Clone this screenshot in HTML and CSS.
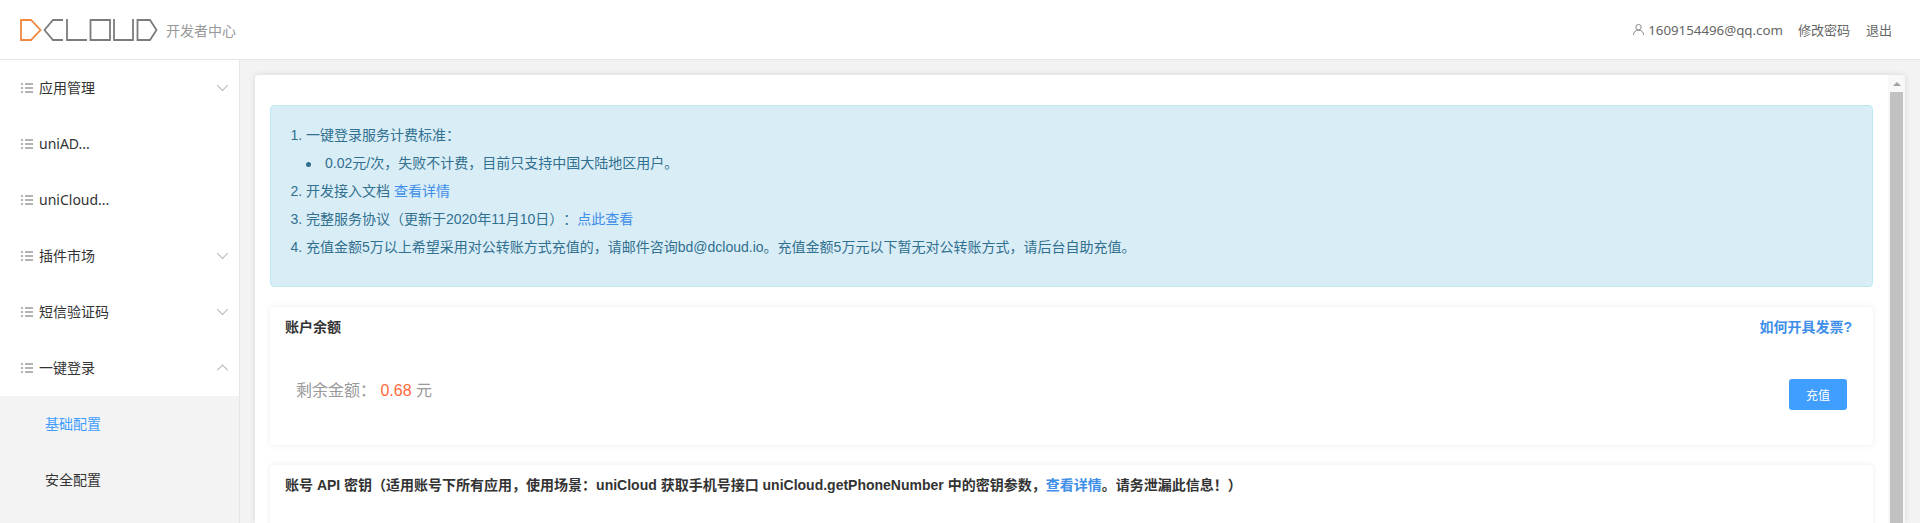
FILE: index.html
```html
<!DOCTYPE html>
<html lang="zh-CN">
<head>
    <meta charset="UTF-8">
    <meta name="viewport" content="width=device-width, initial-scale=1.0">
    <title>DCloud 开发者中心</title>
    <link rel="stylesheet" href="styles.css">
</head>
<body>
    <header class="topbar">
        <div class="brand">
            <svg class="logo" width="140" height="24" viewBox="0 0 140 24" fill="none" stroke-width="1.8">
                <path d="M1 2H11L20.5 12L11 22H1Z" stroke="#f0883e"/>
                <path d="M43 2H33L24.5 12L33 22H43" stroke="#7c7c7c"/>
                <path d="M47 1V22H67" stroke="#7c7c7c"/>
                <path d="M70.5 2H90V22H70.5Z" stroke="#7c7c7c"/>
                <path d="M94 1V22H113V1" stroke="#7c7c7c"/>
                <path d="M117.500 1V22H130L136.500 12L130 2H117.500" stroke="#7c7c7c"/>
            </svg>
            <span class="brand-text">开发者中心</span>
        </div>
        <nav class="account">
            <span class="account-user">
                <svg width="11" height="11" viewBox="0 0 11 11" fill="none" stroke="#888" stroke-width="1">
                    <circle cx="5.500" cy="3.200" r="2.700"/>
                    <path d="M0.500 11C0.500 8 2.500 6.200 5.500 6.200S10.500 8 10.500 11"/>
                </svg>
                1609154496@qq.com
            </span>
            <a href="#">修改密码</a>
            <a href="#">退出</a>
        </nav>
    </header>

    <div class="layout">
        <aside class="sidebar">
            <div class="menu-item">
                <svg class="list-icon" viewBox="0 0 12 10"><path d="M0 1H2M4 1H12M0 5H2M4 5H12M0 9H2M4 9H12"/></svg>
                <span>应用管理</span>
                <svg class="arrow" viewBox="0 0 12 7"><path d="M1 1L6 6L11 1"/></svg>
            </div>
            <div class="menu-item">
                <svg class="list-icon" viewBox="0 0 12 10"><path d="M0 1H2M4 1H12M0 5H2M4 5H12M0 9H2M4 9H12"/></svg>
                <span>uniAD...</span>
            </div>
            <div class="menu-item">
                <svg class="list-icon" viewBox="0 0 12 10"><path d="M0 1H2M4 1H12M0 5H2M4 5H12M0 9H2M4 9H12"/></svg>
                <span>uniCloud...</span>
            </div>
            <div class="menu-item">
                <svg class="list-icon" viewBox="0 0 12 10"><path d="M0 1H2M4 1H12M0 5H2M4 5H12M0 9H2M4 9H12"/></svg>
                <span>插件市场</span>
                <svg class="arrow" viewBox="0 0 12 7"><path d="M1 1L6 6L11 1"/></svg>
            </div>
            <div class="menu-item">
                <svg class="list-icon" viewBox="0 0 12 10"><path d="M0 1H2M4 1H12M0 5H2M4 5H12M0 9H2M4 9H12"/></svg>
                <span>短信验证码</span>
                <svg class="arrow" viewBox="0 0 12 7"><path d="M1 1L6 6L11 1"/></svg>
            </div>
            <div class="menu-item">
                <svg class="list-icon" viewBox="0 0 12 10"><path d="M0 1H2M4 1H12M0 5H2M4 5H12M0 9H2M4 9H12"/></svg>
                <span>一键登录</span>
                <svg class="arrow" viewBox="0 0 12 7"><path d="M1 6L6 1L11 6"/></svg>
            </div>
            <div class="submenu">
                <div class="submenu-item active">基础配置</div>
                <div class="submenu-item">安全配置</div>
            </div>
        </aside>

        <main class="main">
            <div class="panel">
                <div class="panel-body">
                    <div class="alert">
                        <ol>
                            <li>一键登录服务计费标准：
                                <ul>
                                    <li>0.02元/次，失败不计费，目前只支持中国大陆地区用户。</li>
                                </ul>
                            </li>
                            <li>开发接入文档 <a href="#">查看详情</a></li>
                            <li>完整服务协议（更新于2020年11月10日）：<a href="#">点此查看</a></li>
                            <li>充值金额5万以上希望采用对公转账方式充值的，请邮件咨询bd@dcloud.io。充值金额5万元以下暂无对公转账方式，请后台自助充值。</li>
                        </ol>
                    </div>

                    <section class="card">
                        <div class="card-head">
                            <span>账户余额</span>
                            <a href="#">如何开具发票?</a>
                        </div>
                        <div class="balance">
                            <div class="balance-text">剩余金额： <em>0.68</em> 元</div>
                            <button class="btn-primary">充值</button>
                        </div>
                    </section>

                    <section class="card card-tall">
                        <div class="card-head">
                            <span>账号 API 密钥（适用账号下所有应用，使用场景：uniCloud 获取手机号接口 uniCloud.getPhoneNumber 中的密钥参数，<a href="#">查看详情</a>。请务泄漏此信息！）</span>
                        </div>
                    </section>
                </div>
                <div class="scrollbar">
                    <div class="scroll-up"></div>
                    <div class="scroll-thumb"></div>
                </div>
            </div>
        </main>
    </div>
</body>
</html>
```

FILE: styles.css
```css
* {
    box-sizing: border-box;
}
html, body {
    height: 100%;
}
body {
    margin: 0;
    overflow: hidden;
    background: #f3f3f3;
    color: #333;
    font-family: "Liberation Sans", "Noto Sans CJK SC", sans-serif;
    font-size: 14px;
    text-spacing-trim: space-all;
}
a {
    color: #3f8fe8;
    text-decoration: none;
}

.topbar {
    display: flex;
    justify-content: space-between;
    align-items: center;
    height: 60px;
    padding: 0 28px 0 20px;
    background: #fff;
    border-bottom: 1px solid #e6e6e6;
}
.brand {
    display: flex;
    align-items: center;
}
.logo {
    display: block;
}
.brand-text {
    margin-left: 6px;
    color: #999;
}
.account {
    display: flex;
    align-items: center;
    gap: 16px;
    font-family: "Noto Sans", "Noto Sans CJK SC", sans-serif;
    font-size: 13px;
}
.account a {
    color: #666;
}
.account-user {
    display: flex;
    align-items: center;
    gap: 4px;
    margin-right: -1px;
    color: #666;
    font-size: 13.3px;
}

.layout {
    display: flex;
    height: calc(100% - 60px);
}
.sidebar {
    display: flex;
    flex-direction: column;
    flex: none;
    width: 240px;
    background: #fff;
    border-right: 1px solid #e6e6e6;
    font-family: "Noto Sans", "Noto Sans CJK SC", sans-serif;
}
.menu-item {
    display: flex;
    flex: none;
    align-items: center;
    height: 56px;
    padding-left: 21px;
    color: #333;
}
.menu-item span {
    padding-bottom: 2px;
}
.list-icon {
    width: 12px;
    height: 10px;
    margin-right: 6px;
    fill: none;
    stroke: #666;
    stroke-width: 1;
}
.arrow {
    width: 13px;
    height: 7.5px;
    margin-left: auto;
    margin-right: 10px;
    fill: none;
    stroke: #bbb;
    stroke-width: 1;
}
.submenu {
    flex: 1;
    background: #f3f3f3;
}
.submenu-item {
    display: flex;
    align-items: center;
    height: 56px;
    padding: 0 0 2px 45px;
}
.submenu-item.active {
    color: #409eff;
}

.main {
    flex: 1;
    min-width: 0;
    padding: 15px 15px 0;
}
.panel {
    display: flex;
    height: 100%;
    overflow: hidden;
    background: #fff;
    border-radius: 4px 4px 0 0;
    box-shadow: 0 0 6px rgba(0, 0, 0, 0.12);
}
.panel-body {
    flex: 1;
    min-width: 0;
    padding: 30px 15px 0;
}
.scrollbar {
    flex: none;
    width: 17px;
    padding: 0 2px;
    background: #f8f8f8;
}
.scroll-up {
    width: 0;
    height: 0;
    margin: 7px auto 6px;
    border-left: 4px solid transparent;
    border-right: 4px solid transparent;
    border-bottom: 4px solid #a3a3a3;
}
.scroll-thumb {
    height: 100%;
    background: #c1c1c1;
}

.alert {
    height: 182px;
    margin-bottom: 20px;
    padding: 15px 20px;
    color: #31708f;
    background: #d9edf7;
    border: 1px solid #bce8f1;
    border-radius: 4px;
    line-height: 28px;
}
.alert ol {
    margin: 0;
    padding-left: 15px;
}
.alert ul {
    margin: 0;
    padding-left: 19px;
    list-style: none;
}
.alert ul li::before {
    content: "";
    display: inline-block;
    width: 5px;
    height: 5px;
    margin: 0 14.5px 0 -19.5px;
    border-radius: 50%;
    background: #31708f;
    vertical-align: middle;
}
.alert a {
    color: #3f8fe8;
}

.card {
    margin-bottom: 20px;
    border-radius: 4px;
    box-shadow: 0 0 6px rgba(0, 0, 0, 0.08);
}
.card-tall {
    height: 200px;
}
.card-head {
    display: flex;
    justify-content: space-between;
    padding: 10px 21px 0 15px;
    font-weight: bold;
    line-height: 20px;
}
.balance {
    display: flex;
    justify-content: space-between;
    align-items: center;
    height: 108px;
    padding: 0 26px;
}
.balance-text {
    margin-bottom: 4px;
    color: #999;
    font-size: 16px;
}
.balance-text em {
    color: #ff6a39;
    font-style: normal;
}
.btn-primary {
    width: 58px;
    height: 31px;
    margin-top: 7px;
    padding: 0;
    border: none;
    border-radius: 3px;
    color: #fff;
    background: #409eff;
    font-family: inherit;
    font-size: 12px;
}
```
